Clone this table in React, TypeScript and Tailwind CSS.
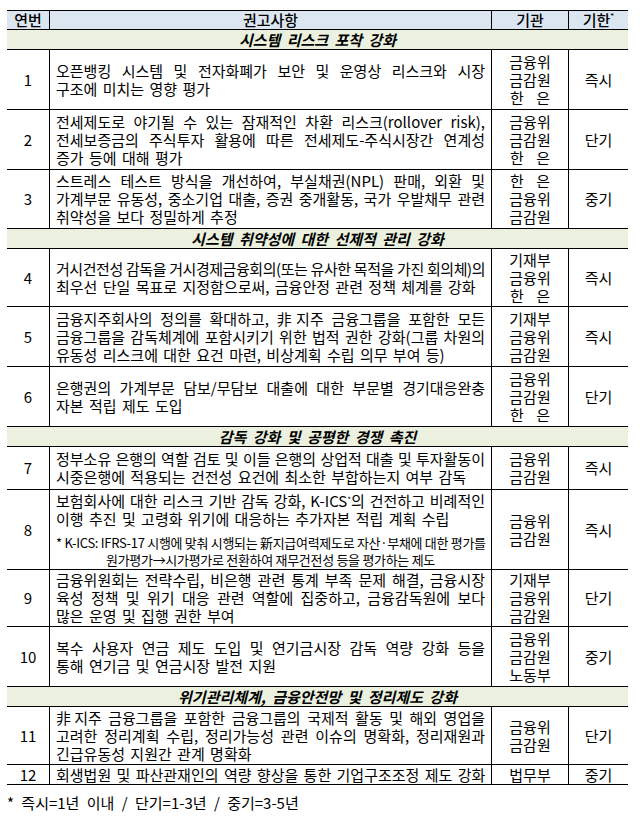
import React from 'react';

type Row = {
  no: number;
  lines: string[];
  note?: boolean;
  tight?: number; // index of a line that needs tighter letter spacing
  agency: string[];
  term: string;
  h: string;
};

type Block = { section: string } | Row;

const blocks: Block[] = [
  { section: '시스템 리스크 포착 강화' },
  {
    no: 1,
    lines: ['오픈뱅킹 시스템 및 전자화폐가 보안 및 운영상 리스크와 시장', '구조에 미치는 영향 평가'],
    agency: ['금융위', '금감원', '한 은'],
    term: '즉시',
    h: 'h-[60px]',
  },
  {
    no: 2,
    lines: [
      '전세제도로 야기될 수 있는 잠재적인 차환 리스크(rollover risk),',
      '전세보증금의 주식투자 활용에 따른 전세제도-주식시장간 연계성',
      '증가 등에 대해 평가',
    ],
    agency: ['금융위', '금감원', '한 은'],
    term: '단기',
    h: 'h-[60px]',
  },
  {
    no: 3,
    lines: [
      '스트레스 테스트 방식을 개선하여, 부실채권(NPL) 판매, 외환 및',
      '가계부문 유동성, 중소기업 대출, 증권 중개활동, 국가 우발채무 관련',
      '취약성을 보다 정밀하게 추정',
    ],
    agency: ['한 은', '금융위', '금감원'],
    term: '중기',
    h: 'h-[59px]',
  },
  { section: '시스템 취약성에 대한 선제적 관리 강화' },
  {
    no: 4,
    lines: [
      '거시건전성 감독을 거시경제금융회의(또는 유사한 목적을 가진 회의체)의',
      '최우선 단일 목표로 지정함으로써, 금융안정 관련 정책 체계를 강화',
    ],
    tight: 0,
    agency: ['기재부', '금융위', '한 은'],
    term: '즉시',
    h: 'h-[58px]',
  },
  {
    no: 5,
    lines: [
      '금융지주회사의 정의를 확대하고, 非지주 금융그룹을 포함한 모든',
      '금융그룹을 감독체계에 포함시키기 위한 법적 권한 강화(그룹 차원의',
      '유동성 리스크에 대한 요건 마련, 비상계획 수립 의무 부여 등)',
    ],
    agency: ['기재부', '금융위', '금감원'],
    term: '즉시',
    h: 'h-[60px]',
  },
  {
    no: 6,
    lines: ['은행권의 가계부문 담보/무담보 대출에 대한 부문별 경기대응완충', '자본 적립 제도 도입'],
    agency: ['금융위', '금감원', '한 은'],
    term: '단기',
    h: 'h-[60px]',
  },
  { section: '감독 강화 및 공평한 경쟁 촉진' },
  {
    no: 7,
    lines: [
      '정부소유 은행의 역할 검토 및 이들 은행의 상업적 대출 및 투자활동이',
      '시중은행에 적용되는 건전성 요건에 최소한 부합하는지 여부 감독',
    ],
    agency: ['금융위', '금감원'],
    term: '즉시',
    h: 'h-[43px]',
  },
  {
    no: 8,
    lines: [
      '보험회사에 대한 리스크 기반 감독 강화, K-ICS*의 건전하고 비례적인',
      '이행 추진 및 고령화 위기에 대응하는 추가자본 적립 계획 수립',
    ],
    note: true,
    agency: ['금융위', '금감원'],
    term: '즉시',
    h: 'h-[80px]',
  },
  {
    no: 9,
    lines: [
      '금융위원회는 전략수립, 비은행 관련 통계 부족 문제 해결, 금융시장',
      '육성 정책 및 위기 대응 관련 역할에 집중하고, 금융감독원에 보다',
      '많은 운영 및 집행 권한 부여',
    ],
    agency: ['기재부', '금융위', '금감원'],
    term: '단기',
    h: 'h-[57px]',
  },
  {
    no: 10,
    lines: ['복수 사용자 연금 제도 도입 및 연기금시장 감독 역량 강화 등을', '통해 연기금 및 연금시장 발전 지원'],
    agency: ['금융위', '금감원', '노동부'],
    term: '중기',
    h: 'h-[60px]',
  },
  { section: '위기관리체계, 금융안전망 및 정리제도 강화' },
  {
    no: 11,
    lines: [
      '非지주 금융그룹을 포함한 금융그룹의 국제적 활동 및 해외 영업을',
      '고려한 정리계획 수립, 정리가능성 관련 이슈의 명확화, 정리재원과',
      '긴급유동성 지원간 관계 명확화',
    ],
    agency: ['금융위', '금감원'],
    term: '단기',
    h: 'h-[58px]',
  },
  {
    no: 12,
    lines: ['회생법원 및 파산관재인의 역량 향상을 통한 기업구조조정 제도 강화'],
    agency: ['법무부'],
    term: '중기',
    h: 'h-[20px]',
  },
];

// renders "K-ICS*" with a raised asterisk
const withSup = (text: string) => {
  const parts = text.split('K-ICS*');
  if (parts.length === 1) return text;
  return (
    <>
      {parts[0]}K-ICS<sup className="text-[8px]">*</sup>
      {parts[1]}
    </>
  );
};

const Agency = ({ name }: { name: string }) => {
  if (name === '한 은') {
    return (
      <div className="flex w-[40px] justify-between">
        <span>한</span>
        <span>은</span>
      </div>
    );
  }
  return <div>{name}</div>;
};

const lineClass = (row: Row, i: number) => {
  const last = i === row.lines.length - 1;
  if (row.tight === i) return 'whitespace-nowrap tracking-[-0.45px] text-justify [text-align-last:justify]';
  if (!last) return 'whitespace-nowrap text-justify [text-align-last:justify]';
  return 'whitespace-nowrap [word-spacing:2px]';
};

const DataRow = ({ row }: { row: Row }) => (
  <div className={`grid grid-cols-[42px_442px_77px_60px] border-b border-black ${row.h}`}>
    <div className="flex items-center justify-center">{row.no}</div>
    <div className="flex flex-col justify-center border-l border-black px-[6px]">
      {row.lines.map((line, i) => (
        <div key={i} className={lineClass(row, i)}>
          {withSup(line)}
        </div>
      ))}
      {row.note && (
        <div className="mt-[6px] text-[13px] leading-[17px] tracking-[-0.3px]">
          <div className="whitespace-nowrap text-justify [text-align-last:justify]">
            * K-ICS: IFRS-17 시행에 맞춰 시행되는 新지급여력제도로 자산·부채에 대한 평가를
          </div>
          <div className="text-center">원가평가→시가평가로 전환하여 재무건전성 등을 평가하는 제도</div>
        </div>
      )}
    </div>
    <div className="flex flex-col items-center justify-center border-l border-black">
      {row.agency.map((a) => (
        <Agency key={a} name={a} />
      ))}
    </div>
    <div className="flex items-center justify-center border-l border-black">{row.term}</div>
  </div>
);

const SectionRow = ({ title }: { title: string }) => (
  <div className="flex h-[20px] items-center justify-center border-b border-black bg-[#ebf1de] font-bold italic [word-spacing:3px]">
    {title}
  </div>
);

export default function App() {
  return (
    <div className="min-h-screen bg-white pt-[10px] font-['Noto_Sans_CJK_KR','Noto_Sans',sans-serif] text-[15px] leading-[18px] text-black">
      <div className="ml-[7px] w-[621px]">
        {/* header */}
        <div className="grid h-[20px] grid-cols-[42px_442px_77px_60px] border-y border-black bg-[#dce6f1] font-medium">
          <div className="flex items-center justify-center">연번</div>
          <div className="flex items-center justify-center border-l border-black">권고사항</div>
          <div className="flex items-center justify-center border-l border-black">기관</div>
          <div className="flex items-center justify-center border-l border-black">
            기한<sup className="text-[8px]">*</sup>
          </div>
        </div>

        {blocks.map((b, i) =>
          'section' in b ? <SectionRow key={i} title={b.section} /> : <DataRow key={i} row={b} />
        )}

        <div className="mt-[9px] [word-spacing:4px]">* 즉시=1년 이내 / 단기=1-3년 / 중기=3-5년</div>
      </div>
    </div>
  );
}
